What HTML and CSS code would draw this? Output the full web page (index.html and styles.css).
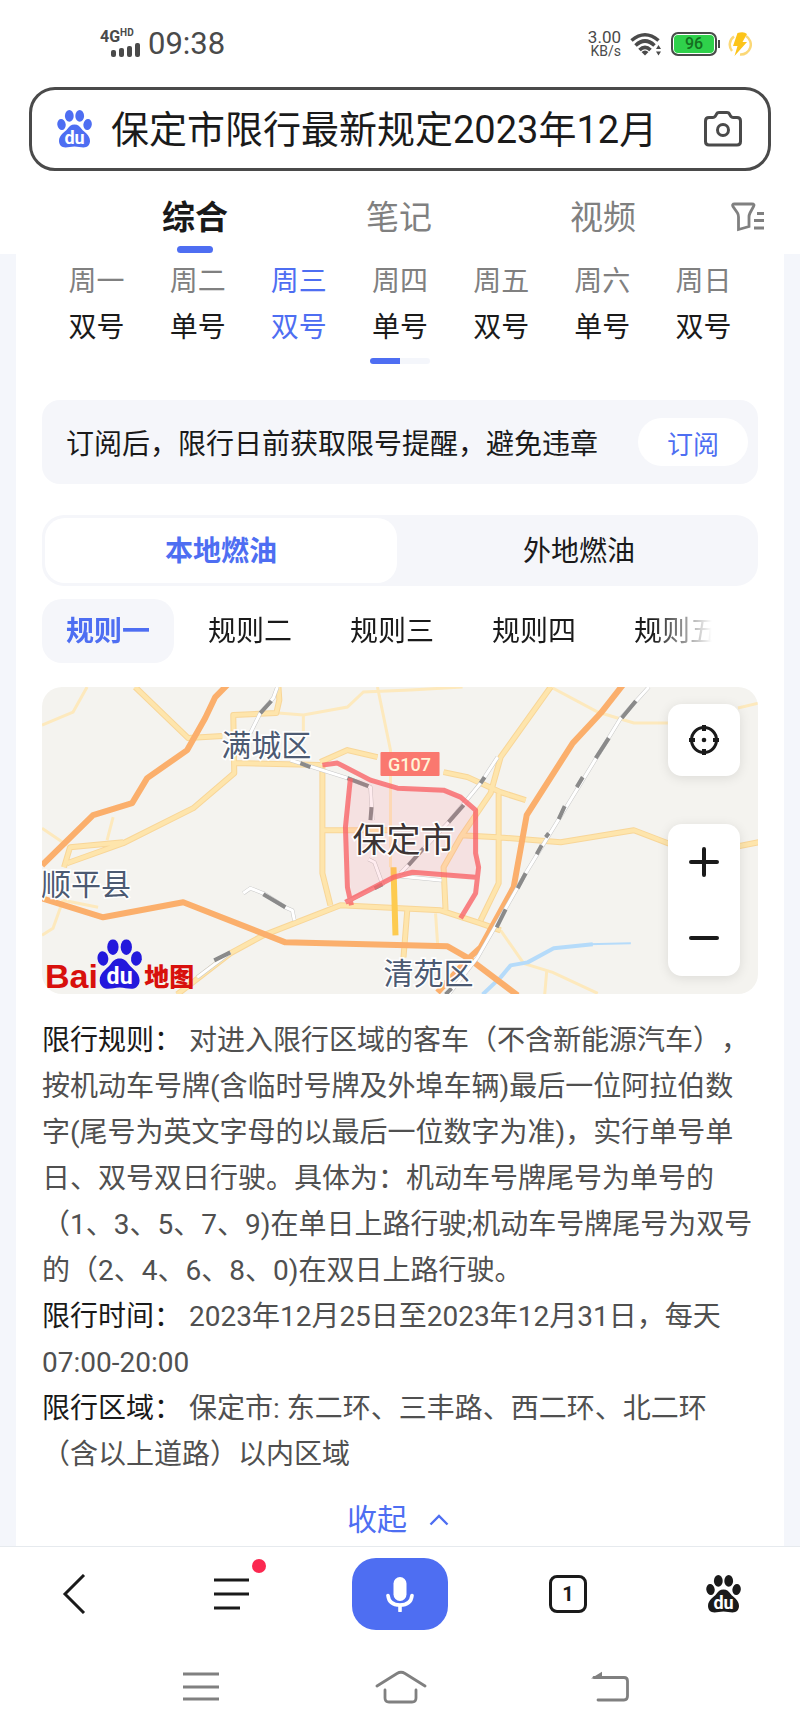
FILE: index.html
```html
<!DOCTYPE html>
<html lang="zh-CN">
<head>
    <meta charset="UTF-8">
    <meta name="viewport" content="width=device-width, initial-scale=1.0">
    <title>保定市限行最新规定2023年12月</title>
    <link rel="stylesheet" href="styles.css">
</head>
<body>
    <header>
        <div class="status-bar">
            <div class="signal">
                <span>4G<sup>HD</sup></span>
                <svg width="30" height="14" viewBox="0 0 30 14" fill="#4a4a4a">
                    <rect x="1" y="7" width="5" height="7" rx="2"/>
                    <rect x="9" y="5" width="5" height="9" rx="2"/>
                    <rect x="17" y="3" width="5" height="11" rx="2"/>
                    <rect x="25" y="0" width="5" height="14" rx="2"/>
                </svg>
            </div>
            <time>09:38</time>
            <div class="speed"><span>3.00</span><small>KB/s</small></div>
            <svg class="wifi" width="32" height="24" viewBox="0 0 32 24" fill="none" stroke="#4a4a4a" stroke-width="3.600">
                <path d="M1.500 8.500Q15 -3 28.500 8.500"/>
                <path d="M5.500 13.500Q15 4.500 24.500 13.500"/>
                <path d="M9.500 18Q15 12.500 20.500 18"/>
                <path d="M11.500 20Q15 17 18.500 20L15 23.500z" fill="#4a4a4a" stroke="none"/>
                <path d="M26 17l2.500-4 2.500 4zM26 19.500l2.500 4 2.500-4z" fill="#4a4a4a" stroke="none"/>
            </svg>
            <div class="battery">96</div>
            <svg class="charge" width="24" height="26" viewBox="0 0 24 26">
                <path d="M6 5.500A10 10 0 0 0 4 20M18 5A10 10 0 0 1 12 23.500" fill="none" stroke="#fbd877" stroke-width="2.500"/>
                <path d="M9.500 2Q16 0 19 3L14.500 11H19L6.500 25L9.500 15H5z" fill="#fcc419"/>
            </svg>
        </div>

        <form class="search-box">
            <svg class="paw-blue" width="35" height="38">
                <symbol id="paw" viewBox="0 0 35 38">
                    <ellipse cx="4.5" cy="14.5" rx="4.2" ry="5.5" transform="rotate(-8 4.5 14.5)"/>
                    <ellipse cx="12.3" cy="5.9" rx="4.4" ry="5.9"/>
                    <ellipse cx="22.7" cy="5.9" rx="4.4" ry="5.9"/>
                    <ellipse cx="30.6" cy="14.5" rx="4.2" ry="5.5" transform="rotate(8 30.6 14.5)"/>
                    <path d="M17.5 14.5c3.600 0 5.200 1.900 7.200 4.600 2.200 3 8.300 6 8.300 11.900 0 3.700-2.500 6.500-6.500 6.500-3 0-5.500-1-9-1s-6 1-9 1c-4 0-6.500-2.800-6.500-6.500 0-5.900 6.100-8.900 8.300-11.900 2-2.700 3.600-4.600 7.200-4.600z"/>
                    <text x="17.500" y="34" text-anchor="middle">du</text>
                </symbol>
                <use href="#paw"/>
            </svg>
            <input type="text" aria-label="搜索" value="保定市限行最新规定2023年12月">
            <button type="button" aria-label="拍照搜索">
                <svg width="38" height="36" viewBox="0 0 38 36" fill="none" stroke="#4a4a4a" stroke-width="3">
                    <path d="M5 6.500H8.500Q11 6.500 12 4L12.500 3Q13.200 1.500 15 1.500H23Q24.800 1.500 25.500 3L26 4Q27 6.500 29.500 6.500H33Q36.500 6.500 36.500 10V30.500Q36.500 34 33 34H5Q1.500 34 1.500 30.500V10Q1.500 6.500 5 6.500z"/>
                    <circle cx="19" cy="19" r="5.500"/>
                </svg>
            </button>
        </form>

        <nav class="tabs">
            <a href="#" class="active">综合</a>
            <a href="#">笔记</a>
            <a href="#">视频</a>
            <button type="button" class="filter" aria-label="筛选">
                <svg width="34" height="30" viewBox="0 0 34 30" fill="none" stroke="#808080" stroke-width="2.800">
                    <path d="M3.500 2H21Q24 2 22.500 4.500L19 11Q18 13 18 15V24.500L7.500 27.500V15Q7.500 12.500 6.500 11L2 4.500Q.8 2 3.500 2z"/>
                    <path d="M26 11.500H33M23 18.500H33M23 26H33"/>
                </svg>
            </button>
        </nav>
    </header>

    <main class="card">
        <ul class="week">
            <li><span>周一</span>双号</li>
            <li><span>周二</span>单号</li>
            <li class="today"><span>周三</span>双号</li>
            <li><span>周四</span>单号</li>
            <li><span>周五</span>双号</li>
            <li><span>周六</span>单号</li>
            <li><span>周日</span>双号</li>
        </ul>
        <div class="pager"></div>

        <div class="subscribe">
            <p>订阅后，限行日前获取限号提醒，避免违章</p>
            <button type="button">订阅</button>
        </div>

        <div class="segment">
            <button type="button" class="active">本地燃油</button>
            <button type="button">外地燃油</button>
        </div>

        <div class="rules">
            <button type="button" class="active">规则一</button>
            <button type="button">规则二</button>
            <button type="button">规则三</button>
            <button type="button">规则四</button>
            <button type="button">规则五</button>
        </div>

        <div class="map">
            <svg class="map-image" viewBox="0 0 715 307">
                <defs>
                    <path id="roads" d="M93 0L146 51L180 49M236 -2L237 13L234 26L191 28L192 86L151 121L81 156L25 176M81 155L28 160L22 180M192 76L278 78M278 75L305 63L335 70M280 78V186L288 218M135 307L188 266L221 248L298 218L358 221L398 223L438 236L458 243M281 143H348M418 148L455 150L518 155L591 143L625 156L670 164L716 155M508 0L458 70L448 106L418 150L401 180L403 223M401 85L425 90L458 105L483 113M456 106V196L438 233M365 220L361 270"/>
                    <path id="rails" d="M235 0L231 11L218 26L208 46M248 73L305 91L328 100L330 133M326 172L332 175L340 197L303 215M606 0L578 31L483 186L435 270L406 307M455 70L438 96L406 135L358 186M201 206L208 201L221 206L243 220L250 223L252 233M188 265L155 290M358 189L399 193"/>
                </defs>
                <rect width="715" height="307" fill="#f4f3ef"/>
                <!-- 小路 -->
                <g fill="none" stroke="#fde9bd" stroke-width="3">
                    <path d="M0 38L31 25L45 0M236 26L261 28L305 20L321 5L368 3L420 0M0 141L25 158M71 130L65 153M261 28V45M21 213L11 241L0 248M21 213L56 220"/>
                    <path d="M335 0L348 63V180M508 0L555 25L591 36H625M695 21L716 16M458 243L481 276L510 285L555 306M504 284L502 307M393 226L395 256"/>
                </g>
                <!-- 主路 -->
                <g fill="none" stroke-linejoin="round">
                    <use href="#roads" stroke="#f8d698" stroke-width="6"/>
                    <use href="#roads" stroke="#fee5ac" stroke-width="4"/>
                    <path d="M351 180L353 248" stroke="#fdcb50" stroke-width="6"/>
                    <!-- 河 -->
                    <path d="M588 256L545 257" stroke="#b5dbfa" stroke-width="2"/>
                    <path d="M550 257L511 261L485 275L468 278L458 290L440 307" stroke="#b5dbfa" stroke-width="4"/>
                    <!-- 高速 -->
                    <path d="M0 178L51 128L90 116L105 91L145 63L163 31L173 10L185 -2M0 211L61 230L141 215L243 255L405 259L426 271L475 308M580 -2L558 26L530 56L484 128L471 200L438 260L426 271L395 305" stroke="#fbaf6c" stroke-width="6"/>
                    <!-- 铁路 -->
                    <use href="#rails" stroke="#c8c8c8" stroke-width="4"/>
                    <use href="#rails" stroke="#fff" stroke-width="3"/>
                    <path d="M229 14L218 26M258 76L268 80M305 91L326 99M329 120L328 133M221 207L243 220M340 197L332 201M188 265L172 273M593 14L579 31M566 51L553 71M540 90L534 100M522 119L516 132M506 146L503 150M499 158L494 167M483 186L475 201M463 222L454 240M442 90L438 96M421 118L406 135M381 161L366 178M409 301L403 307" stroke="#8a8a8a" stroke-width="4"/>
                </g>
                <!-- 限行区域 -->
                <path d="M308 91L328 93L355 101L401 103L418 110L433 123V166L436 180L433 190L370 185L351 190L309 212L303 140z" fill="#ff5f78" fill-opacity=".12"/>
                <path d="M280 78L295 76L328 93L355 101L401 103L418 110L433 123V166L436 180L433 206L418 231M308 91L303 140L305 200L309 218M303 215L351 190L370 185L433 190" fill="none" stroke="#f96468" stroke-opacity=".8" stroke-width="5" stroke-linejoin="round"/>
                <rect x="338" y="65" width="59" height="24" rx="1" fill="#fa786f"/>
                <text class="road-sign" x="367" y="84" text-anchor="middle">G107</text>
                <text class="district" x="179" y="69">满城区</text>
                <text class="district" x="-1" y="208">顺平县</text>
                <text class="district" x="341" y="297">清苑区</text>
                <text class="city" x="310" y="165">保定市</text>
                <text class="brand" x="3" y="301">Bai</text>
                <svg class="paw-map" x="55" y="252" width="45" height="50" viewBox="0 0 35 38" preserveAspectRatio="none"><use href="#paw"/></svg>
                <text class="brand-cn" x="102" y="299">地图</text>
            </svg>
            <div class="map-tools">
                <button type="button" class="locate" aria-label="定位">
                    <svg width="30" height="30" viewBox="0 0 30 30" fill="none" stroke="#1a1a1a" stroke-width="3">
                        <circle cx="15" cy="15" r="12.500"/>
                        <path d="M15 0V6M15 24V30M0 15H6M24 15H30" stroke-width="4"/>
                        <circle cx="15" cy="15" r="2.300" fill="#1a1a1a" stroke="none"/>
                    </svg>
                </button>
                <div class="zoom">
                    <button type="button" aria-label="放大">
                        <svg width="30" height="30" viewBox="0 0 30 30" stroke="#1a1a1a" stroke-width="4" stroke-linecap="round"><path d="M2 15H28M15 2V28"/></svg>
                    </button>
                    <button type="button" aria-label="缩小">
                        <svg width="30" height="30" viewBox="0 0 30 30" stroke="#1a1a1a" stroke-width="4" stroke-linecap="round"><path d="M2 15H28"/></svg>
                    </button>
                </div>
            </div>
        </div>

        <div class="detail">
            <p><b>限行规则：</b> 对进入限行区域的客车（不含新能源汽车），按机动车号牌(含临时号牌及外埠车辆)最后一位阿拉伯数字(尾号为英文字母的以最后一位数字为准)，实行单号单日、双号双日行驶。具体为：机动车号牌尾号为单号的（1、3、5、7、9)在单日上路行驶;机动车号牌尾号为双号的（2、4、6、8、0)在双日上路行驶。</p>
            <p><b>限行时间：</b> 2023年12月25日至2023年12月31日，每天07:00-20:00</p>
            <p><b>限行区域：</b> 保定市: 东二环、三丰路、西二环、北二环（含以上道路）以内区域</p>
        </div>

        <button type="button" class="collapse">
            收起
            <svg width="20" height="12" viewBox="0 0 20 12" fill="none" stroke="#4e6ef2" stroke-width="2.400"><path d="M1.500 10.500L10 2L18.500 10.500"/></svg>
        </button>
    </main>

    <footer>
        <div class="toolbar">
            <button type="button" aria-label="返回">
                <svg width="24" height="40" viewBox="0 0 24 40" fill="none" stroke="#1a1a1a" stroke-width="3"><path d="M22 1L3 20L22 39"/></svg>
            </button>
            <button type="button" class="menu" aria-label="菜单">
                <svg width="36" height="34" viewBox="0 0 36 34" fill="none" stroke="#1a1a1a" stroke-width="3"><path d="M0 3H35M0 17H35M0 31H26"/></svg>
            </button>
            <button type="button" class="mic" aria-label="语音">
                <svg width="28" height="36" viewBox="0 0 28 36">
                    <rect x="7.500" y="1" width="13" height="24" rx="6.500" fill="#fff"/>
                    <path d="M2 19.500Q3 29 14 29T26 19.500M14 29V35" fill="none" stroke="#fff" stroke-width="3.600" stroke-linecap="round"/>
                </svg>
            </button>
            <button type="button" class="windows" aria-label="窗口"><span>1</span></button>
            <button type="button" aria-label="首页">
                <svg class="paw-black" width="35" height="38"><use href="#paw"/></svg>
            </button>
        </div>
        <div class="system-nav">
            <button type="button" aria-label="任务">
                <svg width="38" height="32" viewBox="0 0 38 32" fill="none" stroke="#808080" stroke-width="2.800"><path d="M1 3H37M1 16H37M1 28H37"/></svg>
            </button>
            <button type="button" aria-label="主屏幕">
                <svg width="52" height="34" viewBox="0 0 52 34" fill="none" stroke="#808080" stroke-width="2.800" stroke-linecap="round">
                    <path d="M2 16L22 3.500Q26 1 30 3.500L50 16M10 20V28Q10 32 14 32H37Q41 32 41 28V20"/>
                </svg>
            </button>
            <button type="button" aria-label="后退">
                <svg width="38" height="32" viewBox="0 0 38 32" fill="none" stroke="#808080" stroke-width="2.800" stroke-linecap="round">
                    <path d="M3 6.500H33Q36.500 6.500 36.500 10V25Q36.500 29 33 29H7"/>
                    <path d="M0 7.500L11 .8V7.500z" fill="#808080" stroke="none"/>
                </svg>
            </button>
        </div>
    </footer>
</body>
</html>
```

FILE: styles.css
```css
* {
    box-sizing: border-box;
}

body {
    margin: 0;
    background-color: #f4f6fb;
    color: #1a1a1a;
    font-family: Roboto, "Noto Sans CJK SC", sans-serif;
    font-size: 28px;
    text-spacing-trim: space-all;
}

button {
    display: flex;
    align-items: center;
    justify-content: center;
    padding: 0;
    border: none;
    background: none;
    color: inherit;
    font: inherit;
    cursor: pointer;
}

p,
ul {
    margin: 0;
    padding: 0;
}

svg {
    display: block;
    flex: none;
}

#paw text {
    font-size: 18px;
    font-weight: 700;
    fill: #fff;
}

.paw-blue {
    fill: #4e6ef2;
}

.paw-black {
    fill: #1a1a1a;
}

.paw-map {
    fill: #2319dc;
}

header,
footer {
    background-color: #fff;
}

/* Строка состояния */
.status-bar {
    display: flex;
    align-items: center;
    height: 87px;
    padding: 0 48px 0 100px;
    color: #4a4a4a;
}

.signal {
    display: flex;
    flex-direction: column;
    align-items: flex-end;
    width: 40px;
    font-size: 16px;
    font-weight: 700;
    line-height: 12px;
}

.signal span {
    align-self: flex-start;
}

.signal sup {
    font-size: 10px;
    line-height: 0;
}

.status-bar time {
    margin: 0 auto 0 8px;
    font-size: 31px;
}

.speed {
    display: flex;
    flex-direction: column;
    align-items: flex-end;
    font-size: 17px;
    line-height: 14px;
}

.speed small {
    font-size: 14px;
}

.wifi {
    margin: 0 9px;
}

.battery {
    position: relative;
    width: 46px;
    height: 24px;
    border: 2px solid #4a4a4a;
    border-radius: 7px;
    box-shadow: inset 0 0 0 1px #fff;
    background-color: #2fd14b;
    color: #14701f;
    font-size: 16px;
    font-weight: 500;
    line-height: 20px;
    text-align: center;
}

.battery::after {
    content: "";
    position: absolute;
    top: 6px;
    right: -5px;
    width: 2px;
    height: 8px;
    background-color: #4a4a4a;
}

.charge {
    margin-left: 11px;
}

.search-box {
    display: flex;
    align-items: center;
    height: 84px;
    margin: 0 29px;
    padding: 0 26px 0 25px;
    border: 3px solid #4a4a4a;
    border-radius: 26px;
}

.search-box input {
    flex: 1;
    min-width: 0;
    margin: 0 16px 0 19px;
    padding: 0 0 5px;
    border: none;
    outline: none;
    background: none;
    color: #1a1a1a;
    font: inherit;
    font-size: 38px;
}

.tabs {
    display: grid;
    grid-template-columns: repeat(3, 1fr) 85px;
    height: 83px;
    padding: 0 10px 0 93px;
}

.tabs a {
    display: flex;
    flex-direction: column;
    align-items: center;
    padding-top: 24px;
    color: #808080;
    font-size: 33px;
    line-height: 46px;
    text-decoration: none;
}

.tabs .active {
    color: #1a1a1a;
    font-weight: 700;
}

.tabs .active::after {
    content: "";
    width: 36px;
    height: 7px;
    margin-top: 5px;
    border-radius: 4px;
    background-color: #4e6ef2;
}

.filter {
    height: 92px;
}

.card {
    margin: 0 16px;
    padding: 5px 26px 0;
    background-color: #fff;
}

.week {
    display: grid;
    grid-template-columns: repeat(7, 1fr);
    padding: 0 4px;
    list-style: none;
    line-height: 46px;
    text-align: center;
}

.week span {
    display: block;
    color: #808080;
}

.week .today,
.week .today span {
    color: #4e6ef2;
}

.pager {
    width: 60px;
    height: 6px;
    margin: 7px auto 36px;
    border-radius: 3px;
    background: linear-gradient(to right, #4e6ef2 50%, #f4f6fb 50%);
}

.subscribe {
    display: flex;
    align-items: center;
    justify-content: space-between;
    height: 84px;
    padding: 0 10px 0 24px;
    border-radius: 18px;
    background-color: #f5f6fa;
}

.subscribe button {
    width: 110px;
    height: 48px;
    border-radius: 24px;
    background-color: #fff;
    color: #4e6ef2;
    font-size: 26px;
}

.segment {
    display: flex;
    gap: 6px;
    height: 71px;
    margin: 31px 0 13px;
    padding: 3px;
    border-radius: 22px;
    background-color: #f5f6fa;
}

.segment button {
    flex: 1;
    padding-bottom: 4px;
    border-radius: 20px;
}

.segment .active {
    background-color: #fff;
    color: #4e6ef2;
    font-weight: 700;
}

.rules {
    display: flex;
    gap: 10px;
    margin: 0 46px 24px 0;
    overflow: hidden;
    mask-image: linear-gradient(to left, transparent, #000 60px);
}

.rules button {
    flex: none;
    height: 64px;
    padding: 0 24px 4px;
    border-radius: 20px;
}

.rules .active {
    background-color: #f5f6fa;
    color: #4e6ef2;
    font-weight: 700;
}

.map {
    position: relative;
    border-radius: 20px;
    overflow: hidden;
}

.map-image {
    width: 100%;
    height: auto;
}

.district {
    font-size: 30px;
    fill: #4c5a72;
    stroke: #fff;
    stroke-width: 3px;
    paint-order: stroke;
}

.city {
    font-size: 34px;
    fill: #3c3434;
    stroke: #fff;
    stroke-width: 3px;
    paint-order: stroke;
}

.road-sign {
    font-size: 18px;
    font-weight: 500;
    fill: #fff3d6;
}

.brand,
.brand-cn {
    font-weight: 900;
    fill: #d8100c;
}

.brand {
    font-family: "Liberation Sans", sans-serif;
    font-size: 34px;
}

.brand-cn {
    font-size: 25px;
}

.map-tools {
    position: absolute;
    top: 17px;
    right: 18px;
    display: flex;
    flex-direction: column;
    gap: 48px;
}

.locate,
.zoom {
    width: 72px;
    border-radius: 14px;
    background-color: #fff;
    box-shadow: 0 2px 12px rgba(0, 0, 0, 0.1);
}

.locate {
    height: 72px;
}

.zoom button {
    width: 72px;
    height: 76px;
}

.detail {
    margin-top: 24px;
    color: #505050;
    line-height: 46px;
}

.detail b {
    color: #1a1a1a;
    font-weight: 400;
}

.collapse {
    gap: 22px;
    width: 100%;
    height: 68px;
    padding: 16px 4px 0 0;
    color: #4e6ef2;
    font-size: 30px;
    line-height: 40px;
}

.toolbar {
    display: grid;
    grid-template-columns: 148fr 168fr 168fr 168fr 142fr;
    align-items: center;
    justify-items: center;
    height: 94px;
    padding-right: 6px;
    border-top: 1px solid #e6eaee;
}

.menu {
    position: relative;
}

.menu::after {
    content: "";
    position: absolute;
    top: -18px;
    right: -16px;
    width: 14px;
    height: 14px;
    border-radius: 50%;
    background-color: #fb2850;
}

.mic {
    width: 96px;
    height: 72px;
    border-radius: 24px;
    background-color: #4e6ef2;
}

.windows {
    width: 38px;
    height: 38px;
    border: 3px solid #1a1a1a;
    border-radius: 8px;
    font-size: 20px;
    font-weight: 700;
}

.system-nav {
    display: grid;
    grid-template-columns: 200fr 200fr 218fr;
    align-items: center;
    justify-items: center;
    height: 94px;
    padding: 0 81px 0 101px;
}
```
